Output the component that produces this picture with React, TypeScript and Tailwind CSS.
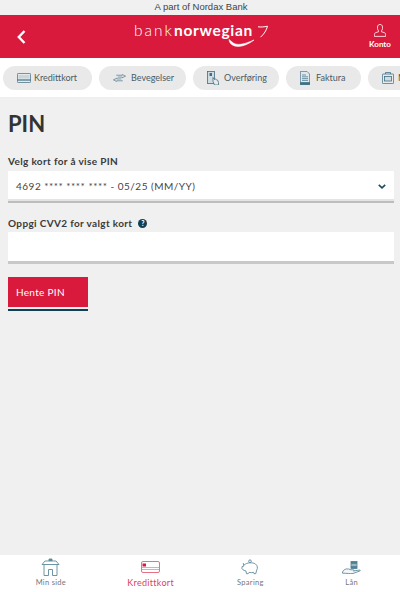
import React from 'react';

const CardIcon = ({ className }: { className: string }) => (
  <svg className={className} viewBox="0 0 14 10" fill="none" stroke="currentColor" strokeWidth={0.8}>
    <rect x="0.4" y="0.4" width="13.2" height="9.2" rx="1" />
    <rect x="1.500" y="2" width="11" height="3.500" fill="#c4d6de" stroke="none" />
    <path d="M0.500 7h13" strokeWidth={1.2} />
  </svg>
);

const ArrowsIcon = ({ className }: { className: string }) => (
  <svg className={className} viewBox="0 0 14 8" fill="none" stroke="currentColor" strokeWidth={0.7}>
    <path d="M3.500 1h6.500V0.300l3.500 1.700L10 3.700V3H5" />
    <path d="M10.500 7H4v.7L.5 6 4 4.300V5h5" />
  </svg>
);

const TransferIcon = ({ className }: { className: string }) => (
  <svg className={className} viewBox="0 0 12 14" fill="none" stroke="currentColor" strokeWidth={0.8}>
    <rect x="0.400" y="0.400" width="7" height="12" fill="#cfdde3" />
    <rect x="2.500" y="2" width="2.500" height="3" fill="currentColor" stroke="none" />
    <path d="M6 6.500l1.500 2 .8-.5 1 .6 1.500.8.700 2.200v2.400H7.500L6 10.500z" fill="#e9e9e9" />
  </svg>
);

const DocIcon = ({ className }: { className: string }) => (
  <svg className={className} viewBox="0 0 10 14" fill="none" stroke="currentColor" strokeWidth={0.7}>
    <path d="M0.400 0.400h6.600l2.600 2.600v10.600H.4z" fill="#dfe8ec" />
    <path d="M2 4h4M2 5.800h6M2 7.600h6M2 9.400h6" />
    <path d="M0.400 11.500h9.200v2.100H.4z" fill="currentColor" />
  </svg>
);

const CaseIcon = ({ className }: { className: string }) => (
  <svg className={className} viewBox="0 0 12 12" fill="none" stroke="currentColor" strokeWidth={0.8}>
    <path d="M3.500 2V.5h5V2" />
    <rect x="0.400" y="2" width="11.200" height="9.600" rx="0.800" />
    <rect x="2.500" y="4.500" width="7" height="4.500" fill="#cfdde3" />
  </svg>
);

const tabs = [
  { label: 'Kredittkort', icon: <CardIcon className="h-[10px] w-[14px]" />, cls: 'w-[89px] gap-[3px]' },
  { label: 'Bevegelser', icon: <ArrowsIcon className="h-[8px] w-[13px]" />, cls: 'w-[87px] gap-[5px]' },
  { label: 'Overføring', icon: <TransferIcon className="h-[14px] w-[12px]" />, cls: 'w-[86px] gap-[5px]' },
  { label: 'Faktura', icon: <DocIcon className="h-[14px] w-[10px]" />, cls: 'w-[75px] gap-[6px]' },
  { label: 'Mine', icon: <CaseIcon className="h-[12px] w-[12px]" />, cls: 'w-[80px] gap-[4px]' },
];

const HomeIcon = () => (
  <svg className="h-[18px] w-[19px] text-[#5f8a9c]" viewBox="0 0 19 18" fill="none" stroke="currentColor" strokeWidth={0.9}>
    <path d="M1 6.500L4 3h11l3 3.500z" />
    <path d="M8 3V1h3v2" fill="currentColor" />
    <path d="M3 6.500v11h4.500v-6h4v6H16v-11" />
  </svg>
);

const RedCardIcon = () => (
  <svg className="h-[12px] w-[19px] text-[#e8607a]" viewBox="0 0 19 12" fill="none" stroke="currentColor" strokeWidth={0.9}>
    <rect x="0.500" y="0.500" width="18" height="11" rx="1.500" />
    <rect x="1.500" y="2.500" width="3.500" height="3" fill="#d91a3c" stroke="none" />
    <path d="M1 6.500h17M1 8.500h17" strokeWidth={0.6} />
  </svg>
);

const PiggyIcon = () => (
  <svg className="h-[16px] w-[18px] text-[#5f8a9c]" viewBox="0 0 20 18" fill="none" stroke="currentColor" strokeWidth={1}>
    <circle cx="10" cy="2.500" r="1.500" />
    <path d="M4 6.500c2-2.500 9-3 12-1 2.500 1.700 3 5 1.500 7l-1 4h-2l-.5-1.500c-2 .5-3 .5-5 0L8 16.500H6l-.5-3C4 13 2 12.500 1 11V8.500l2-.5-.5-3z" />
  </svg>
);

const LoanIcon = () => (
  <svg className="h-[13px] w-[19px] text-[#4f7f93]" viewBox="0 0 19 13" fill="none" stroke="currentColor" strokeWidth={0.8}>
    <rect x="9" y="0.500" width="6" height="2" fill="currentColor" />
    <rect x="9" y="3" width="6" height="2" fill="#cfdde3" />
    <rect x="9" y="5.500" width="6" height="2" fill="currentColor" />
    <path d="M0.500 11c1-2.500 3.500-3.500 6-3l2.500.8h2.500c.8 0 .8 1 0 1.200l6-1c1-.1 1 .6.300 1l-6.800 2.500c-3 .4-6-.3-10.500-.3z" fill="#f4f7f8" />
  </svg>
);

const navItems = [
  { label: 'Min side', icon: <HomeIcon />, active: false, cls: 'w-[100px]' },
  { label: 'Kredittkort', icon: <RedCardIcon />, active: true, cls: 'w-[100px]' },
  { label: 'Sparing', icon: <PiggyIcon />, active: false, cls: 'w-[100px]' },
  { label: 'Lån', icon: <LoanIcon />, active: false, cls: 'w-[100px] pl-[3px]' },
];

export default function App() {
  return (
    <div className="flex h-[592px] w-[400px] flex-col overflow-hidden bg-[#f0f0f0] font-['Lato',sans-serif] text-[#333]">
      <div className="flex h-[15px] items-center justify-center pl-[2px] font-['Liberation_Sans',sans-serif] text-[9.5px] text-[#444]">
        A part of Nordax Bank
      </div>

      {/* Red header */}
      <header className="flex h-[43px] items-center justify-between bg-[#d91a3c] text-white">
        <svg className="ml-[17px] h-[14px] w-[9px]" viewBox="0 0 9 14" fill="none" stroke="currentColor" strokeWidth={2.4}>
          <path d="M7.500 1L1.800 7l5.700 6" />
        </svg>
        <div className="relative ml-[8px] h-[26px] w-[134px]">
          <div className="-mt-[2px] flex items-baseline whitespace-nowrap text-[15.5px] leading-[17px]">
            <span className="font-light tracking-[2px]">bank</span>
            <span className="font-bold tracking-[0.7px]">norwegian</span>
          </div>
          <svg className="absolute inset-0 h-[26px] w-[134px]" viewBox="0 0 134 26" fill="none" stroke="currentColor">
            <path d="M124 2.800c3 .4 6 .2 9.500-.6-1 4-3.500 8-7 11" strokeWidth={1} />
            <path d="M95 15.500c.5 7 11 11 25 .5-10 4.500-18 6.500-22.500 1.500z" fill="currentColor" strokeWidth={0.6} />
          </svg>
        </div>
        <div className="mr-[8px] flex w-[24px] flex-col items-center">
          <svg className="h-[13px] w-[12px]" viewBox="0 0 12 13" fill="none" stroke="currentColor" strokeWidth={0.8}>
            <path d="M3.500 3c0-3.400 5-3.400 5 0v1.500c0 1.200-.7 2-1 2.300v1l2.800.8c.8.3 1.300 1 1.300 1.800v2H.4v-2c0-.8.5-1.500 1.300-1.800l2.800-.8v-1c-.3-.3-1-1.100-1-2.300z" />
          </svg>
          <span className="mt-[3px] text-[8px] leading-[9px] font-bold">Konto</span>
        </div>
      </header>

      {/* Tabs */}
      <div className="flex h-[40px] items-center gap-[7px] overflow-hidden border-b border-[#eee] bg-white pl-[3px]">
        {tabs.map((tab) => (
          <div
            key={tab.label}
            className={`flex h-[24px] shrink-0 items-center rounded-full bg-[#e9e9e9] pl-[14px] text-[9px] text-[#4a5c65] ${tab.cls}`}
          >
            <span className="flex text-[#3f6f84]">{tab.icon}</span>
            {tab.label}
          </div>
        ))}
      </div>

      {/* Content */}
      <main className="flex flex-1 flex-col pr-[6px] pl-[8px]">
        <h1 className="mt-[11px] text-[22px] leading-[29px] font-bold">PIN</h1>

        <label className="mt-[16px] text-[10px] leading-[14px] font-bold tracking-[0.35px] text-[#3a3a3a]">Velg kort for å vise PIN</label>
        <div className="mt-[3px] flex h-[32px] items-center justify-between border-b-[2px] border-[#bdbdbd] bg-white pr-[8px] pl-[8px] text-[10px] tracking-[0.5px] text-[#444] shadow-[inset_0_-2px_0_#e4e4e4]">
          <span>4692 **** **** **** - 05/25 (MM/YY)</span>
          <svg className="h-[5px] w-[8px] text-[#1c4a5e]" viewBox="0 0 8 5" fill="none" stroke="currentColor" strokeWidth={1.6}>
            <path d="M0.800 0.800L4 3.800l3.200-3" />
          </svg>
        </div>

        <div className="mt-[13px] flex items-center gap-[6px] text-[10px] leading-[14px] font-bold tracking-[0.35px] text-[#3a3a3a]">
          <label>Oppgi CVV2 for valgt kort</label>
          <span className="flex h-[9px] w-[9px] items-center justify-center rounded-full bg-[#123f53] text-[7px] leading-none font-black text-white">?</span>
        </div>
        <div className="mt-[2px] h-[32px] border-b-[3px] border-[#c8c8c8] bg-white" />

        <div className="mt-[13px] flex w-[80px] flex-col gap-[2px]">
          <button className="flex h-[30px] items-center bg-[#d91a3c] pl-[8px] text-[10px] tracking-[0.3px] text-white">
            Hente PIN
          </button>
          <div className="h-[2px] bg-[#123f53]" />
        </div>
      </main>

      {/* Bottom nav */}
      <nav className="flex h-[37px] bg-white pl-[1px]">
        {navItems.map((item) => (
          <div key={item.label} className={`flex flex-col items-center pt-[3px] ${item.cls}`}>
            <div className="flex h-[18px] items-center">{item.icon}</div>
            <span className={item.active ? 'mt-[1px] text-[9px] leading-[11px] tracking-[0.3px] text-[#e0405f]' : 'mt-[1px] text-[7.5px] leading-[11px] tracking-[0.3px] text-[#777]'}>
              {item.label}
            </span>
          </div>
        ))}
      </nav>
    </div>
  );
}
